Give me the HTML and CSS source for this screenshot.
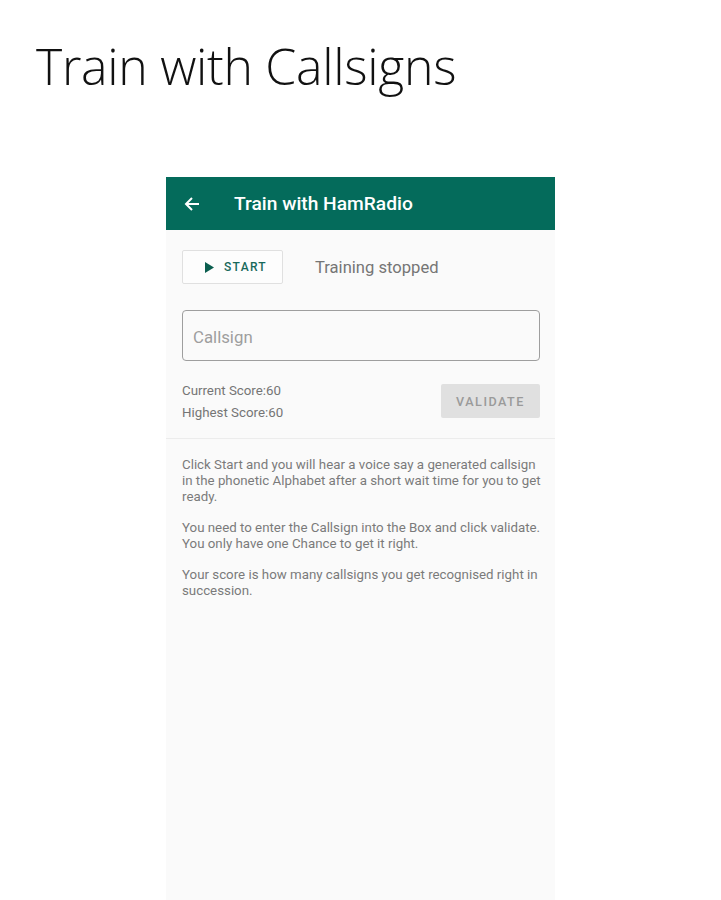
FILE: index.html
```html
<html>

<head>
  <meta charset="utf8">
  <title>Train with Callsigns</title>
  <link rel="stylesheet" href="styles.css">
</head>

<body>
  <h1 class="page-title">Train with Callsigns</h1>
  <section class="phone">
    <header class="appbar">
      <svg class="back" width="16" height="16" viewBox="0 0 16 16">
        <path d="M15 8H2M8 2L2 8l6 6" fill="none" stroke="#fff" stroke-width="2"/>
      </svg>
      <span class="appbar-title">Train with HamRadio</span>
    </header>
    <div class="controls">
      <div class="start-row">
        <button class="btn-start">
          <svg width="9" height="11" viewBox="0 0 9 11"><path d="M0 0L9 5.5 0 11z" fill="#0b5e4f"/></svg>
          START
        </button>
        <span class="status">Training stopped</span>
      </div>
      <div class="field">Callsign</div>
      <div class="score-row">
        <div class="scores">
          <div>Current Score:60</div>
          <div>Highest Score:60</div>
        </div>
        <button class="btn-validate">VALIDATE</button>
      </div>
    </div>
    <div class="help">
      <p>Click Start and you will hear a voice say a generated callsign in the phonetic Alphabet after a short wait time for you to get ready.</p>
      <p>You need to enter the Callsign into the Box and click validate. You only have one Chance to get it right.</p>
      <p>Your score is how many callsigns you get recognised right in succession.</p>
    </div>
  </section>
</body>

</html>
```

FILE: styles.css
```css
body {
  margin: 0;
  background: #fff;
  font-family: Roboto, sans-serif;
  overflow: hidden;
}

.page-title {
  margin: 36px 0 0 36px;
  font: 300 50px/60px "Open Sans", sans-serif;
  color: #111;
  letter-spacing: -0.3px;
}

.phone {
  margin: 81px 0 0 166px;
  width: 389px;
  height: 723px;
  background: #fafafa;
}

.appbar {
  display: flex;
  align-items: center;
  height: 53px;
  background: #046b5b;
  color: #fff;
}

.back {
  margin-left: 18px;
}

.appbar-title {
  margin-left: 34px;
  font-size: 19.2px;
  font-weight: 500;
}

.controls {
  padding: 20px 15px 0 16px;
  border-bottom: 1px solid #ececec;
}

.start-row {
  display: flex;
  align-items: center;
  gap: 32px;
}

button {
  font-family: Roboto, sans-serif;
  border-radius: 2px;
}

.btn-start {
  display: flex;
  align-items: center;
  gap: 10px;
  width: 101px;
  height: 34px;
  padding: 0 0 0 22px;
  background: #fdfdfd;
  border: 1px solid #e0e0e0;
  color: #18695b;
  font-size: 12px;
  font-weight: 500;
  letter-spacing: 1.3px;
}

.status {
  font-size: 16.6px;
  color: #757575;
}

.field {
  box-sizing: border-box;
  height: 51px;
  margin-top: 26px;
  padding: 0 10px;
  border: 1px solid #9e9e9e;
  border-radius: 4px;
  line-height: 52px;
  font-size: 16.8px;
  color: #9e9e9e;
}

.score-row {
  display: flex;
  justify-content: space-between;
  align-items: flex-start;
  padding: 19px 0 14px;
}

.scores {
  font-size: 13.3px;
  line-height: 22px;
  color: #757575;
}

.btn-validate {
  margin-top: 4px;
  width: 99px;
  height: 34px;
  background: #e0e0e0;
  border: none;
  color: #9a9a9a;
  font-size: 12.6px;
  font-weight: 500;
  letter-spacing: 1.5px;
}

.help {
  padding: 18px 14px 0 16px;
  font-size: 13.3px;
  line-height: 16px;
  color: #7a7a7a;
}

.help p {
  margin: 0 0 15px;
}
```
